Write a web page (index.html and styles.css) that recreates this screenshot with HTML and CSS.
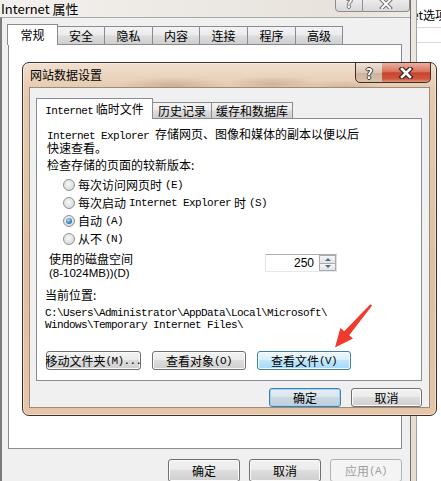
FILE: index.html
```html
<!DOCTYPE html>
<html lang="zh-CN">
<head>
  <meta charset="UTF-8" />
  <title>Internet 属性 - 网站数据设置</title>
  <link rel="stylesheet" href="styles.css">
</head>
<body>
  <div class="screen">

    <!-- outer window: Internet 属性 -->
    <div class="props">
      <div class="props-title">
        <span>Internet 属性</span>
        <div class="cap-btns">
          <span class="cap help">?</span>
          <span class="cap close">
            <svg width="14" height="10" viewBox="0 0 14 10">
              <path d="M3 1 L11 9 M11 1 L3 9" stroke="#6e6e6e" stroke-width="4" stroke-linecap="square"/>
              <path d="M3 1 L11 9 M11 1 L3 9" stroke="#fdfdfd" stroke-width="2" stroke-linecap="square"/>
            </svg>
          </span>
        </div>
      </div>
      <div class="props-body">
        <div class="tabs">
          <div class="tab active w51">常规</div>
          <div class="tab w47">安全</div>
          <div class="tab w48">隐私</div>
          <div class="tab w47">内容</div>
          <div class="tab w48">连接</div>
          <div class="tab w48">程序</div>
          <div class="tab w47">高级</div>
        </div>
        <div class="page"></div>
        <div class="actions">
          <button class="btn w72">确定</button>
          <button class="btn w72">取消</button>
          <button class="btn w72 disabled">应用<span class="a">(A)</span></button>
        </div>
      </div>
    </div>
    <div class="edge"></div>
    <div class="side">
      <div class="side-row">et选项</div>
      <div class="side-row short"></div>
    </div>

    <!-- inner dialog: 网站数据设置 -->
    <div class="dialog">
      <div class="dlg-title">网站数据设置</div>
      <span class="dlg-help">?</span>
      <span class="dlg-close">
        <svg width="16" height="12" viewBox="0 0 16 12">
          <path d="M4 2 L12 10 M12 2 L4 10" stroke="#3b2420" stroke-width="5" stroke-linecap="square"/>
          <path d="M4 2 L12 10 M12 2 L4 10" stroke="#ffffff" stroke-width="2.6" stroke-linecap="square"/>
        </svg>
      </span>

      <div class="client">
        <div class="tabs small">
          <div class="tab active w117"><span class="a">Internet</span> 临时文件</div>
          <div class="tab w59">历史记录</div>
          <div class="tab w81">缓存和数据库</div>
        </div>

        <div class="panel">
          <p class="desc"><span class="a">Internet Explorer </span>存储网页、图像和媒体的副本以便以后<br>快速查看。</p>
          <p class="heading">检查存储的页面的较新版本:</p>

          <div class="radios">
            <div class="radio-row"><span class="radio"></span>每次访问网页时<span class="a">(E)</span></div>
            <div class="radio-row"><span class="radio"></span>每次启动<span class="a"> Internet Explorer </span>时<span class="a">(S)</span></div>
            <div class="radio-row"><span class="radio on"><i></i></span>自动<span class="a">(A)</span></div>
            <div class="radio-row"><span class="radio"></span>从不<span class="a">(N)</span></div>
          </div>

          <div class="disk">
            <div class="disk-label">
              <div>使用的磁盘空间</div>
              <div class="range">(8-1024MB))(D)</div>
            </div>
            <div class="spin">
              <div class="spin-val">250</div>
              <div class="spin-btns">
                <span class="spin-up"><b></b></span>
                <span class="spin-down"><b></b></span>
              </div>
            </div>
          </div>

          <p class="loc-title">当前位置:</p>
          <p class="path a">C:\Users\Administrator\AppData\Local\Microsoft\<br>Windows\Temporary Internet Files\</p>

          <div class="panel-btns">
            <button class="btn w95">移动文件夹<span class="a">(M)...</span></button>
            <button class="btn w94">查看对象<span class="a">(O)</span></button>
            <button class="btn w94 hover">查看文件<span class="a">(V)</span></button>
          </div>
        </div>

        <div class="dlg-actions">
          <button class="btn w72 default">确定</button>
          <button class="btn w71">取消</button>
        </div>
      </div>
    </div>

    <svg class="arrow" width="441" height="481" viewBox="0 0 441 481">
      <polygon points="372,305.8 349.2,335.3 353,338.6 335,347.5 340.4,328 344.2,331.3 370.4,304.2" fill="#ef3a2e"/>
    </svg>
  </div>
</body>
</html>
```

FILE: styles.css
```css
* {
  box-sizing: border-box;
}

body {
  margin: 0;
  width: 441px;
  height: 481px;
  overflow: hidden;
  background: #ffffff;
  font-family: "Noto Sans CJK SC", sans-serif;
  font-size: 12px;
  color: #000;
}

p {
  margin: 0;
}

/* ascii runs in the old bitmap font */
.a {
  font-family: "Liberation Mono", monospace;
  font-size: 11px;
  letter-spacing: -0.6px;
}

.screen {
  position: relative;
  display: flex;
  height: 481px;
}

/* ---------- outer window ---------- */
.props {
  width: 410px;
  display: flex;
  flex-direction: column;
}

.props-title {
  position: relative;
  height: 22px;
  padding: 0 0 0 1px;
  font-size: 13px;
  line-height: 17px;
  background: linear-gradient(90deg, #f3f1ee, #ebe7e2 55%, #e8e2da 85%, #efebe6);
}

.cap-btns {
  position: absolute;
  right: 0;
  top: -7px;
  display: flex;
}

.cap {
  height: 19px;
  border: 1px solid #8d8d8d;
  background: linear-gradient(#f8f8f8, #e4e4e4 60%, #d9d9d9);
  display: flex;
  align-items: flex-end;
  justify-content: center;
  padding-bottom: 2px;
}

.cap.help {
  width: 28px;
  border-radius: 0 0 0 4px;
  font-weight: bold;
  font-size: 13px;
  line-height: 12px;
  color: #fdfdfd;
  text-shadow: 1px 0 #707070, -1px 0 #707070, 0 1px #707070, 0 -1px #707070;
}

.cap.close {
  width: 47px;
  border-left: none;
  border-radius: 0 0 4px 0;
}

.props-body {
  flex: 1;
  background: #f0f0f0;
  border-left: 2px solid #7c7c7c;
  border-top: 1px solid #a9a9a9;
  padding: 6px 8px 0 6px;
}

.tabs {
  display: flex;
  align-items: flex-end;
  height: 20px;
  position: relative;
  z-index: 1;
}

.tab {
  height: 18px;
  border-top: 1px solid #898c95;
  border-right: 1px solid #898c95;
  background: linear-gradient(#f3f3f3, #ebebeb 48%, #dddddd 52%, #cfcfcf);
  text-align: center;
  line-height: 18px;
  white-space: nowrap;
}

.tab.active {
  height: 21px;
  margin-bottom: -1px;
  margin-left: -1px;
  border-left: 1px solid #898c95;
  background: #ffffff;
  line-height: 19px;
}

.tabs.small .tab {
  height: 16px;
  line-height: 16px;
}

.tabs.small .tab.active {
  height: 21px;
  margin-left: 0;
  line-height: 20px;
}

.w47 { width: 47px; }
.w48 { width: 48px; }
.w51 { width: 51px; }
.w59 { width: 59px; }
.w71 { width: 71px; }
.w72 { width: 72px; }
.w81 { width: 81px; }
.w94 { width: 94px; }
.w95 { width: 95px; }
.w117 { width: 117px; }

.page {
  height: 405px;
  background: #ffffff;
  border: 1px solid #898c95;
}

.actions {
  display: flex;
  justify-content: flex-end;
  gap: 9px;
  margin-top: 10px;
}

.actions .btn {
  height: 23px;
}

.edge {
  width: 7px;
  background: linear-gradient(#ece7e0, #e6ddd1);
  border-left: 1px solid #6f6f6f;
  border-right: 1px solid #a3a3a3;
}

.side {
  flex: 1;
  overflow: hidden;
  background: #ffffff;
}

.side-row {
  height: 28px;
  padding-top: 8px;
  line-height: 14px;
  margin-left: -5px;
  white-space: nowrap;
  border-bottom: 1px solid #dadada;
}

.side-row.short {
  height: 15px;
  padding: 0;
}

/* ---------- buttons ---------- */
.btn {
  height: 19px;
  padding: 0;
  border: 1px solid #707070;
  border-radius: 3px;
  background: linear-gradient(#f2f2f2, #ebebeb 45%, #dddddd 50%, #cfcfcf);
  box-shadow: inset 0 0 0 1px #fbfbfb;
  font-family: "Noto Sans CJK SC", sans-serif;
  font-size: 12px;
  line-height: 14px;
  color: #000;
  display: flex;
  align-items: center;
  justify-content: center;
  white-space: nowrap;
}

.btn.hover {
  border-color: #3c7fb1;
  background: linear-gradient(#eaf6fd, #d9f0fc 45%, #bee6fd 50%, #a7d9f5);
}

.btn.default {
  border-color: #3c7fb1;
  background: linear-gradient(#e6eef4, #dbe5ec 45%, #cbd8e2 50%, #c0d0dc);
  box-shadow: inset 0 0 0 1px #9fd3f1;
}

.btn.disabled {
  color: #a0a0a0;
  border-color: #adb2b5;
  background: #f4f4f4;
  box-shadow: none;
}

/* ---------- inner dialog ---------- */
.dialog {
  position: absolute;
  left: 22px;
  top: 62px;
  width: 415px;
  height: 354px;
  padding: 0 6px 7px 6px;
  display: flex;
  flex-direction: column;
  border: 1px solid #3e2f28;
  border-radius: 7px;
  background:
    radial-gradient(ellipse 55px 9px at 150px 23px, rgba(140, 100, 70, 0.28), transparent),
    radial-gradient(ellipse 45px 8px at 250px 21px, rgba(140, 100, 70, 0.25), transparent),
    radial-gradient(ellipse 40px 7px at 320px 24px, rgba(140, 100, 70, 0.2), transparent),
    linear-gradient(#f0dfd0, #e6cbb1 24px, #dfbfa1 60%, #e5c5a7);
  box-shadow: inset 0 0 0 1px rgba(255, 255, 255, 0.45);
}

.dlg-title {
  height: 24px;
  line-height: 24px;
  padding-left: 1px;
}

.dlg-help,
.dlg-close {
  position: absolute;
  top: -1px;
  height: 21px;
  border: 1px solid #3e2f28;
  display: flex;
  align-items: center;
  justify-content: center;
}

.dlg-help {
  right: 53px;
  width: 28px;
  border-radius: 0 0 0 5px;
  background: linear-gradient(#eee2d6, #dcc6b3 50%, #cdb39d 52%, #d9c1ab);
  font-weight: bold;
  font-size: 14px;
  line-height: 14px;
  color: #ffffff;
  text-shadow: 1px 0 #3f3530, -1px 0 #3f3530, 0 1px #3f3530, 0 -1px #3f3530;
}

.dlg-close {
  right: 5px;
  width: 49px;
  border-left: none;
  border-radius: 0 0 5px 0;
  background: linear-gradient(#eab0a0, #d8735f 45%, #c7432c 52%, #cf5a40 85%, #e39a79);
}

.client {
  flex: 1;
  background: #f0f0f0;
  border: 1px solid #9c8a7c;
  padding: 10px 7px 0 6px;
}

.panel {
  height: 263px;
  background: #ffffff;
  border: 1px solid #898c95;
  padding: 9px 10px 0 10px;
  line-height: 12px;
}

.heading {
  margin-top: 5px;
}

.radios {
  margin-top: 5px;
}

.radio-row {
  height: 18px;
  display: flex;
  align-items: center;
  gap: 3px;
  padding-left: 16px;
  white-space: nowrap;
}

.radio {
  width: 12px;
  height: 12px;
  border-radius: 50%;
  border: 1px solid #8e9294;
  background: radial-gradient(circle at 45% 40%, #f6f6f6, #e2e2e2 55%, #cfcfcf);
  display: flex;
  align-items: center;
  justify-content: center;
}

.radio i {
  width: 6px;
  height: 6px;
  border-radius: 50%;
  background: radial-gradient(circle at 40% 35%, #b9e2fa, #3b82c4 55%, #1b4f8c);
}

.disk {
  margin-top: 5px;
  display: flex;
  align-items: flex-start;
}

.disk-label {
  width: 216px;
  margin-left: 2px;
}

.range {
  margin-top: 2px;
  font-family: "Liberation Sans", sans-serif;
  font-size: 11.5px;
}

.spin {
  width: 72px;
  height: 18px;
  margin-top: 1px;
  display: flex;
  background: #ffffff;
  border: 1px solid;
  border-color: #abadb3 #dbdfe6 #e3e9ef #e2e3ea;
}

.spin-val {
  flex: 1;
  text-align: right;
  padding-right: 5px;
  font-family: "Liberation Sans", sans-serif;
  font-size: 12px;
  line-height: 16px;
}

.spin-btns {
  width: 17px;
  display: flex;
  flex-direction: column;
}

.spin-up,
.spin-down {
  flex: 1;
  border: 1px solid #a9abb0;
  background: linear-gradient(#f6f6f6, #dfe3e8);
  display: flex;
  align-items: center;
  justify-content: center;
}

.spin-down {
  border-top: none;
}

.spin-up b {
  border-left: 3px solid transparent;
  border-right: 3px solid transparent;
  border-bottom: 3px solid #4a6d92;
}

.spin-down b {
  border-left: 3px solid transparent;
  border-right: 3px solid transparent;
  border-top: 3px solid #4a6d92;
}

.loc-title {
  margin-top: 10px;
  margin-left: -2px;
}

.path {
  margin-top: 6px;
  margin-left: -2px;
  white-space: nowrap;
}

.panel-btns {
  margin-top: 20px;
  margin-left: -1px;
  display: flex;
  gap: 11px;
}

.dlg-actions {
  margin-top: 7px;
  display: flex;
  justify-content: flex-end;
  gap: 10px;
}

/* annotation arrow */
.arrow {
  position: absolute;
  left: 0;
  top: 0;
  pointer-events: none;
}
```
